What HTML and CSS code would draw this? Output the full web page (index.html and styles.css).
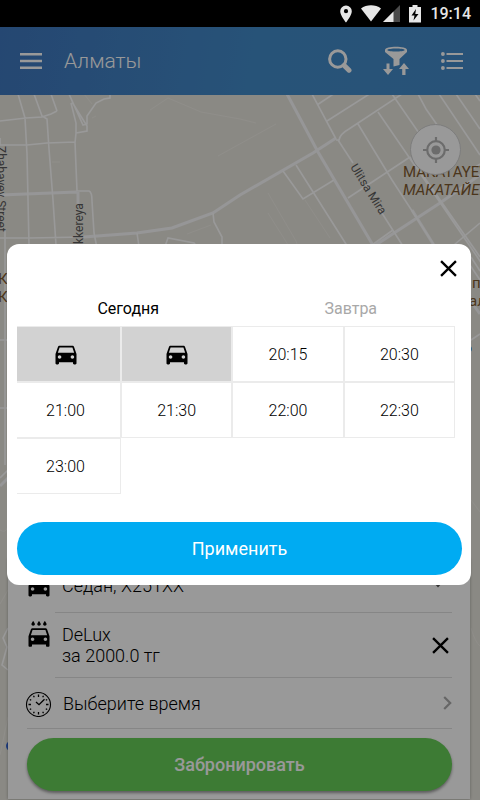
FILE: index.html
```html
<!DOCTYPE html>
<html lang="ru">
<head>
<meta charset="utf-8">
<meta name="viewport" content="width=device-width, initial-scale=1">
<title>Алматы</title>
<link rel="stylesheet" href="styles.css">
</head>
<body>
<svg class="defs" aria-hidden="true">
  <symbol id="car" viewBox="0 0 24 24"><path d="M18.92 6.01C18.72 5.42 18.16 5 17.5 5h-11c-.66 0-1.21.42-1.42 1.01L3 12v8c0 .55.45 1 1 1h1c.55 0 1-.45 1-1v-1h12v1c0 .55.45 1 1 1h1c.55 0 1-.45 1-1v-8l-2.08-5.99zM6.5 16c-.83 0-1.5-.67-1.5-1.5S5.67 13 6.5 13s1.5.67 1.5 1.5S7.33 16 6.5 16zm11 0c-.83 0-1.5-.67-1.5-1.5s.67-1.5 1.5-1.5 1.5.67 1.5 1.5-.67 1.5-1.5 1.5zM5 11l1.5-4.5h11L19 11H5z"/></symbol>
  <symbol id="cross" viewBox="0 0 16 16"><path d="M1 1l14 14M15 1L1 15" fill="none" stroke="currentColor" stroke-width="2.2"/></symbol>
</svg>

<div class="status">
  <svg width="12" height="18" viewBox="0 0 12 18"><path d="M6 .5A5.700 5.700 0 0 0 .2 6.200C.2 10.500 6 17.500 6 17.500s5.800-7 5.800-11.300A5.700 5.700 0 0 0 6 .5zm0 7.800a2.100 2.100 0 1 1 0-4.200 2.100 2.100 0 0 1 0 4.200z"/></svg>
  <span class="signal">
    <svg width="20" height="17" viewBox="0 0 20 17"><path d="M0 3.500C5.500-.8 14.500-.8 20 3.500L10 16.500z"/></svg>
    <svg width="17" height="17" viewBox="0 0 17 17"><path d="M17 0v17H0z" fill="#4a4a4a"/><path d="M10.500 6.500V17H0z"/></svg>
  </span>
  <svg width="12" height="18" viewBox="0 0 12 18"><path fill-rule="evenodd" d="M3.500 0h5v2H12v15.500H0V2h3.500zM7 4L2.500 10.500h3L4.500 15.500 9.500 9H6.300z"/></svg>
  <span class="clock">19:14</span>
</div>

<div class="app">
  <header class="bar">
    <button class="menu" aria-label="Меню"><svg width="22" height="16" viewBox="0 0 22 16"><path d="M0 1.300h22M0 8h22M0 14.700h22" fill="none" stroke="currentColor" stroke-width="2.500"/></svg></button>
    <h1>Алматы</h1>
    <button class="action" aria-label="Поиск"><svg class="line" width="24" height="24" viewBox="0 0 24 24"><circle cx="9.800" cy="10" r="8.200" stroke-width="3"/><path d="M16.200 16.400l4.800 4.800" stroke-width="5" stroke-linecap="round"/></svg></button>
    <button class="action" aria-label="Фильтр"><svg width="26" height="30" viewBox="0 0 26 30"><path fill-rule="evenodd" d="M2 4C2-.2 24-.2 24 4v2l-7.500 7v6l-6 1.500V13L2 6zm2 0c2 2 16 2 18 0-2-2-16-2-18 0z"/><path d="M3.500 17.500h3V23H10l-5 6-5-6h3.500zM19.200 29v-6H16l5-6 5 6h-3.500v6z"/></svg></button>
    <button class="action" aria-label="Список"><svg width="22" height="18" viewBox="0 0 22 18"><g fill="none" stroke="currentColor" stroke-width="2.200"><path d="M5.500 2H22M5.500 9H22M5.500 16H22"/></g><circle cx="1.900" cy="2" r="1.900"/><circle cx="1.900" cy="9" r="1.900"/><circle cx="1.900" cy="16" r="1.900"/></svg></button>
  </header>

  <main class="stage">
    <svg class="map" viewBox="0 95 480 705" preserveAspectRatio="xMinYMin slice" aria-hidden="true">
      <g class="faint">
        <path d="M150 110l18-12 33 14 39 7 16 4M218 156l58-32M84 94l8 10M92 118l4-2M187 234l24-9M268 193l28 48 4 12M268 213l22 35M305 200l25 38M52 162h8"/>
        <path d="M0 604l8-14M471 628q4 14 9 18M0 755l8-38M471 500l9 12M0 530q6 4 8-4"/>
      </g>
      <g class="road">
        <path d="M0 195l77-3M78 192v14M84 237l53-4 35-5 41-15 27-18 73-42 23-15M287 94l31 58 56 95M365 252l75-49 40-28M412 210l28 45M470 300l10 14M0 486l8-8"/>
      </g>
      <g class="street">
        <path d="M0 121l26-3 16-1 9-3 6-3M18 94l7 24 2 36 2 91M34 94l8 22 5 3 2 30 4 51 3 45M51 94l6 17M69 94l14 31 4-1 0-8 9-13 8-4 6-1v-5M71 103l5 20 0 10-1 10M72 102l15 24v5l-11 2M0 145h27l20-2 28-1 2 49M0 138v7M77 191h12q3 1 3 10l2 32 3 15M0 238h29l55-1M5 230v15M137 233l3 20M213 213l1 9 8 15v10M163 252l5-14 26 5 8 10"/>
        <path d="M312 94l24 45M317 105l18-12M327 121l44-28M336 140l3 0q1-6 10-11l53-35M392 94l29 42M418 94l8 15 14 20M439 94l41 61M456 94l24 35M475 94l5 7M338 140l15 23M358 124l34 56 57 88M378 112l46 67 69 101M348 198l62-41M283 171l20 28 31-19M296 165l55 87M380 210l28 44M365 250l28-20M410 157l70 100M448 250l32-27M471 170l9-6M460 250l20 30M471 340l9-6M471 257l9 14"/>
        <path d="M8 628l-5 10 4 9-5 18 6 5M0 340h8M0 408h8M5 245v220M0 478l8-8"/>
      </g>
      <g class="labels">
        <text transform="translate(-3 146) rotate(90)">Zhabayev Street</text>
        <text transform="translate(83 268) rotate(-90)">Vinokkereya</text>
        <text transform="translate(350 167) rotate(58)">Ulitsa Mira</text>
      </g>
      <g class="places">
        <text x="403" y="177">MAKATAYEV</text>
        <text x="403" y="195" font-style="italic">МАКАТАЙЕВ</text>
        <text x="-2" y="284">К</text><text x="-2" y="302">К</text>
        <text x="472" y="288">па</text><text x="469" y="306">ал</text>
      </g>
      <circle cx="469" cy="349" r="3" fill="#4aa3dd"/>
      <circle cx="11" cy="746" r="5" fill="#3367d6"/>
    </svg>
    <button class="locate" aria-label="Моё местоположение"><svg width="26" height="26" viewBox="0 0 26 26"><circle cx="13" cy="13" r="8.800" fill="none" stroke="currentColor" stroke-width="2.200"/><circle cx="13" cy="13" r="4.600"/><path d="M13 0v5M13 21v5M0 13h5M21 13h5" stroke="currentColor" stroke-width="2.200"/></svg></button>

    <section class="sheet" aria-label="Заказ">
      <div class="row row-car">
        <svg class="icon"><use href="#car"/></svg>
        <div class="info"><span>Седан, X251XX</span><svg class="caret" width="8" height="5" viewBox="0 0 8 5"><path d="M0 0h8L4 4.500z"/></svg></div>
      </div>
      <div class="row row-wash">
        <svg class="icon" viewBox="0 0 24 24"><path d="M17 5c.83 0 1.500-.67 1.500-1.500 0-1-1.500-2.700-1.500-2.700s-1.500 1.700-1.500 2.700c0 .83.67 1.500 1.500 1.500zm-5 0c.83 0 1.500-.67 1.500-1.500 0-1-1.500-2.700-1.500-2.700s-1.500 1.700-1.500 2.700c0 .83.67 1.500 1.500 1.500zM7 5c.83 0 1.500-.67 1.500-1.500C8.500 2.500 7 .8 7 .8S5.500 2.500 5.500 3.500C5.500 4.330 6.170 5 7 5zm11.920 3.010C18.720 7.420 18.160 7 17.500 7h-11c-.66 0-1.210.42-1.420 1.010L3 14v8c0 .55.45 1 1 1h1c.55 0 1-.45 1-1v-1h12v1c0 .55.45 1 1 1h1c.55 0 1-.45 1-1v-8l-2.080-5.990zM6.500 18c-.83 0-1.500-.67-1.500-1.500S5.670 15 6.500 15s1.500.67 1.500 1.500S7.330 18 6.500 18zm11 0c-.83 0-1.500-.67-1.500-1.500s.67-1.500 1.500-1.500 1.500.67 1.500 1.500-.67 1.500-1.500 1.500zM5 13l1.500-4.500h11L19 13H5z"/></svg>
        <div class="info"><span>DeLux<br>за 2000.0 тг</span><button class="cross" aria-label="Убрать"><svg><use href="#cross"/></svg></button></div>
      </div>
      <div class="row row-time">
        <svg class="icon line" viewBox="0 0 28 28"><circle cx="13.500" cy="15.500" r="12" stroke-width="1.100"/><g transform="translate(-.5 1.500)"><path d="M11.500 11.500l3 2.700 5.500-5.500" stroke-width="1.300"/><path d="M14 4v2.500M14 21.500V24M4 14h2.500M21.500 14H24M9 5.300l.8 1.400M5.300 9l1.400.8M22.700 9l-1.400.8M5.300 19l1.400-.8M22.700 19l-1.400-.8M9 22.700l.8-1.400M19 22.700l-.8-1.400M19 5.300l-.8 1.400" stroke-width="1.300"/></g></svg>
        <div class="info"><span>Выберите время</span><svg class="chevron" width="9" height="14" viewBox="0 0 9 14"><path d="M1.200 1l6 6-6 6" fill="none" stroke="currentColor" stroke-width="2.200"/></svg></div>
      </div>
      <button class="pill book">Забронировать</button>
    </section>
  </main>

  <div class="scrim">
    <div class="dialog" role="dialog" aria-modal="true" aria-label="Время">
      <button class="cross close" aria-label="Закрыть"><svg><use href="#cross"/></svg></button>
      <div class="tabs" role="tablist">
        <button role="tab" aria-selected="true">Сегодня</button>
        <button role="tab" aria-selected="false">Завтра</button>
      </div>
      <div class="slots">
        <button class="slot taken" aria-label="Занято"><svg class="icon"><use href="#car"/></svg></button>
        <button class="slot taken" aria-label="Занято"><svg class="icon"><use href="#car"/></svg></button>
        <button class="slot">20:15</button>
        <button class="slot">20:30</button>
        <button class="slot">21:00</button>
        <button class="slot">21:30</button>
        <button class="slot">22:00</button>
        <button class="slot">22:30</button>
        <button class="slot">23:00</button>
      </div>
      <button class="pill apply">Применить</button>
    </div>
  </div>
</div>
</body>
</html>
```
FILE: styles.css
```css
* { box-sizing: border-box; }

body {
  margin: 0;
  min-height: 100vh;
  display: flex;
  flex-direction: column;
  font-family: Roboto, "Liberation Sans", sans-serif;
  color: #000;
}

button {
  margin: 0;
  padding: 0;
  border: 0;
  background: none;
  color: inherit;
  font: inherit;
}

svg { display: block; fill: currentColor; flex: none; }
.defs { display: none; }
.icon { width: 28px; height: 28px; }
.line { fill: none; stroke: currentColor; }

.status {
  height: 27px;
  padding-right: 9px;
  display: flex;
  align-items: center;
  justify-content: flex-end;
  gap: 9px;
  background: #000;
  color: #e6e6e6;
}
.signal { display: flex; gap: 2px; }
.clock { font-size: 16px; font-weight: 500; line-height: 20px; }

.app {
  position: relative;
  flex: 1;
  display: flex;
  flex-direction: column;
}

.bar {
  height: 68px;
  padding-left: 20px;
  display: flex;
  align-items: center;
  background: linear-gradient(100deg, #3f77be, #428bc9 55%, #4489c8);
  color: #fff;
}
.bar h1 {
  flex: 1;
  margin: 0 0 0 22px;
  font-size: 21px;
  font-weight: 300;
  line-height: 28px;
}
.action { width: 56px; display: grid; place-items: center; }

.stage {
  position: relative;
  flex: 1;
  display: flex;
  flex-direction: column;
  justify-content: flex-end;
  background: #e7e5dd;
  overflow: hidden;
}
.map { position: absolute; inset: 0; width: 100%; height: 100%; }
.map path { fill: none; }
.faint { stroke: #efede6; stroke-width: 1; }
.street { stroke: #fff; stroke-width: 1.6; }
.road { stroke: #fafafc; stroke-width: 3; }
.labels { fill: #5a5a5a; font-size: 12px; }
.places { fill: #7e5a30; font-size: 15px; }

.locate {
  position: absolute;
  top: 29px;
  right: 19px;
  width: 51px;
  height: 51px;
  display: grid;
  place-items: center;
  border: 1px solid #d0d0d0;
  border-radius: 50%;
  background: #fff;
  color: #b4b4b4;
}

.sheet {
  position: relative;
  margin: 0 10px 1px 8px;
  padding: 0 18px 8px 17px;
  background: #fff;
  box-shadow: 0 0 3px rgba(0, 0, 0, 0.3);
  font-size: 18px;
  font-weight: 300;
  line-height: 21px;
}
.row { display: flex; align-items: center; gap: 2px; }
.info {
  flex: 1;
  align-self: stretch;
  display: flex;
  align-items: center;
  justify-content: space-between;
  padding-left: 7px;
  border-bottom: 1px solid #e0e0e0;
}
.row-car { height: 54px; }
.row-wash { height: 65px; }
.row-wash .icon { margin-bottom: 24px; }
.row-time { height: 51px; margin-left: 2px; gap: 0; border-bottom: 1px solid #e0e0e0; }
.row-time .icon { margin-left: -2px; }
.row-time .info { border: 0; padding-left: 10px; }
.row-wash .info { padding-right: 0; }
.caret { margin-right: 10px; color: #555; }
.chevron { color: #aaa; }

.cross { width: 24px; height: 24px; display: grid; place-items: center; }
.cross svg { width: 17px; height: 17px; }

.pill {
  display: block;
  width: 100%;
  height: 53px;
  border-radius: 27px;
  color: #fff;
  font-size: 18px;
}
.book {
  width: auto;
  min-width: calc(100% - 2px);
  margin: 9px 0 0 2px;
  background: #67cd58;
  box-shadow: 0 2px 3px rgba(0, 0, 0, 0.4);
  font-weight: 500;
}
.apply { background: #00abf2; }

.scrim {
  position: absolute;
  inset: 0;
  display: flex;
  flex-direction: column;
  justify-content: center;
  padding: 2px 9px 0 7px;
  background: rgba(0, 0, 0, 0.4);
}
.dialog {
  padding: 12px 9px 10px 10px;
  border-radius: 12px;
  background: #fff;
}
.close { margin: 0 2px 0 auto; }
.tabs {
  display: grid;
  grid-template-columns: 1fr 1fr;
  margin-top: 17px;
  font-size: 16px;
  line-height: 24px;
}
.tabs [aria-selected="false"] { color: #a8a8a8; }

.slots {
  display: grid;
  grid-template-columns: 104px repeat(3, 1fr);
  grid-auto-rows: 56px;
  margin: 5px 7px 28px 0;
}
.slot {
  display: grid;
  place-items: center;
  border: 1px solid #ebebeb;
  font-size: 16px;
  font-weight: 300;
}
.slot:nth-child(4n + 1) { border-left: 0; padding-right: 6px; }
.taken { background: #d2d2d2; }
```
